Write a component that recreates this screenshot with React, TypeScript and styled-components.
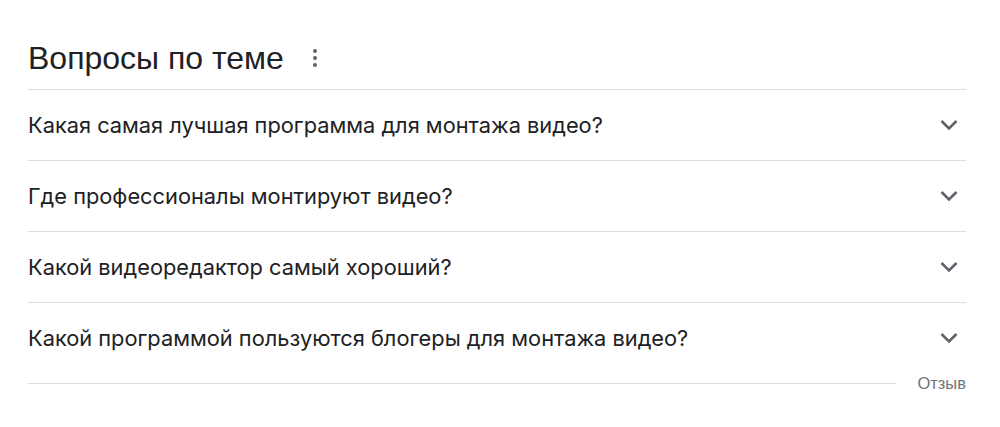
import styled, { createGlobalStyle } from "styled-components";

const GlobalStyle = createGlobalStyle`
    body {
        margin: 0;
        background: #ffffff;
        font-family: "Liberation Sans", Arial, sans-serif;
    }
`;

const Wrapper = styled.div`
    width: 938px;
    padding: 36px 0 0 28px;
`;

const Header = styled.div`
    display: flex;
    align-items: center;
    gap: 27px;
    height: 44px;
    padding-bottom: 9px;
    border-bottom: 1px solid #dadce0;
`;

const Title = styled.h2`
    margin: 0;
    font-family: "Liberation Sans", Arial, sans-serif;
    font-weight: 400;
    font-size: 32px;
    color: #202124;
    line-height: 40px;
`;

const MoreButton = styled.div`
    display: flex;
    align-items: center;
    color: #5f6368;
    svg {
        width: 8px;
        height: 20px;
    }
`;

const Row = styled.div`
    display: flex;
    justify-content: space-between;
    align-items: center;
    height: 70px;
    border-bottom: 1px solid #dadce0;
    cursor: pointer;
    &:last-child {
        border-bottom: none;
    }
`;

const Question = styled.div`
    font-family: Inter, "Open Sans", sans-serif;
    font-size: 21.8px;
    color: #202124;
`;

const Chevron = styled.div`
    display: flex;
    margin-right: 7px;
    color: #5f6368;
    svg {
        width: 20px;
        height: 12px;
    }
`;

const Footer = styled.div`
    display: flex;
    align-items: center;
    gap: 21px;
    margin-top: 1px;
`;

const Line = styled.div`
    flex: 1;
    height: 1px;
    background: #dadce0;
`;

const Feedback = styled.div`
    font-family: "Liberation Sans", Arial, sans-serif;
    font-size: 16.5px;
    color: #70757a;
`;

const questions = [
    "Какая самая лучшая программа для монтажа видео?",
    "Где профессионалы монтируют видео?",
    "Какой видеоредактор самый хороший?",
    "Какой программой пользуются блогеры для монтажа видео?",
];

const App = () => {
    return (
        <Wrapper>
            <GlobalStyle />
            <Header>
                <Title>Вопросы по теме</Title>
                <MoreButton>
                    <svg viewBox="0 0 8 20" fill="currentColor">
                        <circle cx="4" cy="3" r="2" />
                        <circle cx="4" cy="10" r="2" />
                        <circle cx="4" cy="17" r="2" />
                    </svg>
                </MoreButton>
            </Header>
            <div>
                {questions.map((q) => (
                    <Row key={q}>
                        <Question>{q}</Question>
                        <Chevron>
                            <svg viewBox="0 0 20 12" fill="none">
                                <path
                                    d="M2.5 2 10 9.5 17.5 2"
                                    stroke="currentColor"
                                    strokeWidth="2.6"
                                />
                            </svg>
                        </Chevron>
                    </Row>
                ))}
            </div>
            <Footer>
                <Line />
                <Feedback>Отзыв</Feedback>
            </Footer>
        </Wrapper>
    );
};

export default App;
